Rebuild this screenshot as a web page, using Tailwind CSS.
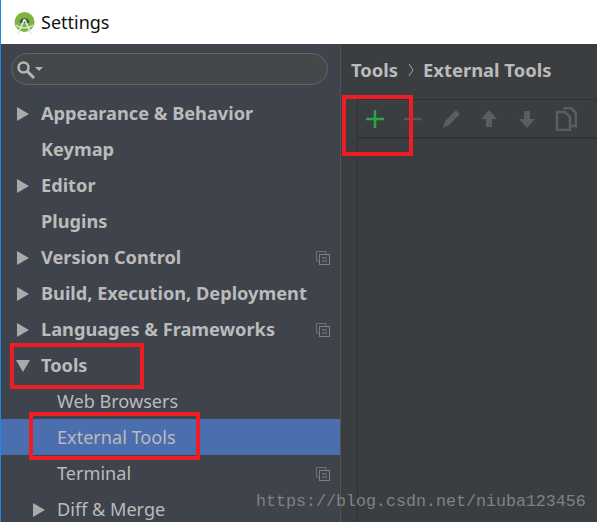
<!doctype html>
<html><head><meta charset="utf-8"><script src="https://cdn.jsdelivr.net/npm/@tailwindcss/browser@4"></script></head>
<body class="bg-white">
<div class="relative w-[597px] h-[522px] overflow-hidden flex flex-col font-['Noto_Sans','Open_Sans',sans-serif]">
  <div class="h-[44px] shrink-0 bg-white flex items-center border-l border-l-[#1e88e5] pl-[13px] gap-[6px]">
    <svg width="21" height="24" viewBox="0 0 21 24" class="mt-[3px]"><circle cx="10.500" cy="10" r="10" fill="#7cb342"/><path d="M5.500 11a5 5 0 0 1 10 0z" fill="#3d5a3e"/><path d="M10.500 7 L4 22 M10.500 7 L17 22" stroke="#e4e6e2" stroke-width="1.800" fill="none"/><path d="M2 13a10 6 0 0 0 17 0" stroke="#e4e6e2" stroke-width="1.200" fill="none"/></svg>
    <span class="text-[18px] text-[#111] leading-none">Settings</span>
  </div>
  <div class="flex flex-1 min-h-0 border-l border-l-[#1e88e5]">
    <div class="w-[339px] shrink-0 bg-[#3e434c] flex flex-col overflow-hidden">
      <div class="mt-[9px] ml-[10px] w-[317px] h-[32px] shrink-0 rounded-full bg-[#45484a] border border-[#626466] flex items-center pl-[5px]">
        <svg width="26" height="22" viewBox="0 0 26 22"><circle cx="6.500" cy="9.500" r="5" fill="none" stroke="#b3b5b7" stroke-width="2.500"/><path d="M10 13l7 7" stroke="#b3b5b7" stroke-width="3"/><path d="M18 9h8l-4 4z" fill="#b3b5b7"/></svg>
      </div>
      <div class="mt-[10px] flex flex-col text-[#bbbbbb] text-[18.100px]">
        <div class="h-[36px] pt-[2px] shrink-0 flex items-center font-bold text-[18.200px]"><svg width="12" height="14" viewBox="0 0 12 14" class="ml-[16px] mr-[12px]"><path d="M0 0l12 7-12 7z" fill="#a9a9a9"/></svg><span>Appearance &amp; Behavior</span></div>
        <div class="h-[36px] pt-[2px] shrink-0 flex items-center font-bold text-[18.200px] pl-[40px]">Keymap</div>
        <div class="h-[36px] pt-[2px] shrink-0 flex items-center font-bold text-[18.200px]"><svg width="12" height="14" viewBox="0 0 12 14" class="ml-[16px] mr-[12px]"><path d="M0 0l12 7-12 7z" fill="#a9a9a9"/></svg><span>Editor</span></div>
        <div class="h-[36px] pt-[2px] shrink-0 flex items-center font-bold text-[18.200px] pl-[40px]">Plugins</div>
        <div class="h-[36px] pt-[2px] shrink-0 flex items-center font-bold text-[18.200px]"><svg width="12" height="14" viewBox="0 0 12 14" class="ml-[16px] mr-[12px]"><path d="M0 0l12 7-12 7z" fill="#a9a9a9"/></svg><span>Version Control</span><svg width="14" height="14" viewBox="0 0 14 14" class="ml-auto mr-[10px]"><path d="M.5.500h9.500v3M.5.500v9.500h3" fill="none" stroke="#6e7175"/><rect x="3.500" y="3.500" width="10" height="10" fill="none" stroke="#7d8084"/><path d="M6 7h5M6 10h5" stroke="#7d8084"/></svg></div>
        <div class="h-[36px] pt-[2px] shrink-0 flex items-center font-bold text-[18.200px]"><svg width="12" height="14" viewBox="0 0 12 14" class="ml-[16px] mr-[12px]"><path d="M0 0l12 7-12 7z" fill="#a9a9a9"/></svg><span>Build, Execution, Deployment</span></div>
        <div class="h-[36px] pt-[2px] shrink-0 flex items-center font-bold text-[18.200px]"><svg width="12" height="14" viewBox="0 0 12 14" class="ml-[16px] mr-[12px]"><path d="M0 0l12 7-12 7z" fill="#a9a9a9"/></svg><span>Languages &amp; Frameworks</span><svg width="14" height="14" viewBox="0 0 14 14" class="ml-auto mr-[10px]"><path d="M.5.500h9.500v3M.5.500v9.500h3" fill="none" stroke="#6e7175"/><rect x="3.500" y="3.500" width="10" height="10" fill="none" stroke="#7d8084"/><path d="M6 7h5M6 10h5" stroke="#7d8084"/></svg></div>
        <div class="h-[36px] pt-[2px] shrink-0 flex items-center font-bold text-[18.200px]"><svg width="14" height="12" viewBox="0 0 14 12" class="ml-[15px] mr-[11px]"><path d="M0 0h14l-7 12z" fill="#a9a9a9"/></svg><span>Tools</span></div>
        <div class="h-[36px] pt-[2px] shrink-0 flex items-center pl-[56px]">Web Browsers</div>
        <div class="h-[36px] pt-[2px] shrink-0 flex items-center pl-[56px] bg-[#4b6eaf]">External Tools</div>
        <div class="h-[36px] pt-[2px] shrink-0 flex items-center pl-[56px]"><span>Terminal</span><svg width="14" height="14" viewBox="0 0 14 14" class="ml-auto mr-[10px]"><path d="M.5.500h9.500v3M.5.500v9.500h3" fill="none" stroke="#6e7175"/><rect x="3.500" y="3.500" width="10" height="10" fill="none" stroke="#7d8084"/><path d="M6 7h5M6 10h5" stroke="#7d8084"/></svg></div>
        <div class="h-[36px] pt-[2px] shrink-0 flex items-center"><svg width="12" height="14" viewBox="0 0 12 14" class="ml-[32px] mr-[12px]"><path d="M0 0l12 7-12 7z" fill="#a9a9a9"/></svg><span>Diff &amp; Merge</span></div>
      </div>
    </div>
    <div class="flex-1 bg-[#3b3e40] border-l border-l-[#505355] flex flex-col min-w-0">
      <div class="h-[55px] shrink-0 pl-[10px] pt-[11px] flex items-start text-[18.400px] font-bold text-[#bbbbbb] leading-[30px]"><span>Tools</span><svg width="6" height="14" viewBox="0 0 6 14" class="ml-[10px] mr-[9px] mt-[8px]"><path d="M1 1l4 6-4 6" fill="none" stroke="#a0a2a4" stroke-width="1"/></svg><span>External Tools</span></div>
      <div class="flex-1 ml-[16px] border-l border-t border-[#303234]">
        <div class="h-[39px] border-b-2 border-[#303234] flex items-center pl-[7px] gap-[18px]">
          <svg width="20" height="20" viewBox="0 0 20 20"><path d="M10 1v18M1 10h18" stroke="#2aa745" stroke-width="2.500"/></svg>
          <svg width="20" height="20" viewBox="0 0 20 20"><path d="M1 10h18" stroke="#555759" stroke-width="2.500"/></svg>
          <svg width="20" height="20" viewBox="0 0 20 20"><path d="M15 1l4 4L8 16l-6 3 2-7z" fill="#5b5d5f"/></svg>
          <svg width="20" height="20" viewBox="0 0 20 20"><path d="M10 1l8 9h-5v8H7v-8H2z" fill="#5b5d5f"/></svg>
          <svg width="20" height="20" viewBox="0 0 20 20"><path d="M10 19l8-9h-5V2H7v8H2z" fill="#5b5d5f"/></svg>
          <svg width="22" height="24" viewBox="0 0 22 24"><path d="M8 1h8l5 5v13h-5" fill="none" stroke="#5b5d5f" stroke-width="2.500"/><path d="M2 5h8l5 5v13H2z" fill="#3b3e40" stroke="#5b5d5f" stroke-width="2.500"/></svg>
        </div>
      </div>
    </div>
  </div>
  <div class="absolute left-[342px] top-[95px] w-[71px] h-[61px] border-[4px] border-[#ee1c25]"></div>
  <div class="absolute left-[10px] top-[343px] w-[134px] h-[46px] border-[4px] border-[#ee1c25]"></div>
  <div class="absolute left-[29px] top-[412px] w-[171px] h-[48px] border-[4px] border-[#ee1c25]"></div>
  <div class="absolute left-[256px] top-[490px] font-['Liberation_Mono',monospace] text-[16.670px] leading-[24px] text-[#7f8183]">https://blog.csdn.net/niuba123456</div>
</div>
</body></html>
